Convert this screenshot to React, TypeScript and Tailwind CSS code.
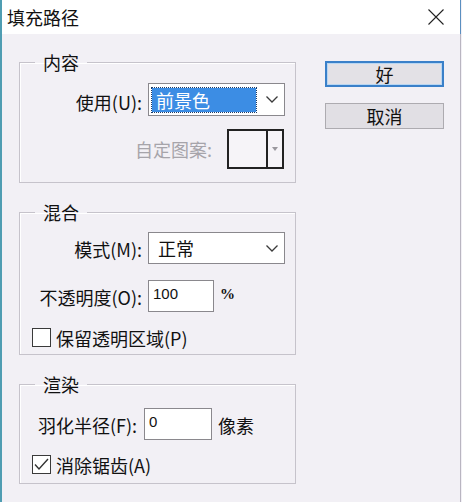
import React from "react"

function Chevron() {
  return (
    <svg width="12" height="7" viewBox="0 0 12 7" fill="none">
      <path d="M0.5 0.5 L6 6 L11.5 0.5" stroke="#3a3a3a" strokeWidth="1.3" />
    </svg>
  )
}

function Group({ title, className, children }: { title: string; className: string; children: React.ReactNode }) {
  return (
    <fieldset className={`w-[277px] border border-[#c6c3cb] shadow-[inset_1px_1px_0_#ffffff] ${className}`}>
      <legend className="ml-[15px] px-[8px] text-[18px] leading-[22px] text-[#111]">{title}</legend>
      {children}
    </fieldset>
  )
}

function Check({ checked }: { checked?: boolean }) {
  return (
    <span className="w-[19px] h-[19px] border border-[#3a3a3a] bg-white flex items-center justify-center">
      {checked && (
        <svg width="15" height="13" viewBox="0 0 15 13" fill="none">
          <path d="M1 6.5 L5 11 L14 1" stroke="#333" strokeWidth="1.4" />
        </svg>
      )}
    </span>
  )
}

export default function App() {
  return (
    <div className="w-[462px] h-[502px] flex border-l-2 border-[#4f9db2] font-['Noto_Sans_CJK_SC',sans-serif] text-[#111] overflow-hidden">
      <div className="flex-1 flex flex-col">
        <div className="h-[34px] bg-white flex items-center justify-between pl-[5px] pr-[16px]">
          <span className="text-[18px] leading-none">填充路径</span>
          <svg width="16" height="16" viewBox="0 0 16 16" fill="none">
            <path d="M0.5 0.5 L15.5 15.5 M15.5 0.5 L0.5 15.5" stroke="#222" strokeWidth="1.1" />
          </svg>
        </div>
        <div className="flex-1 bg-[#f2f0f5] flex pl-[17px] pt-[17px] gap-[29px]">
          <div className="flex flex-col gap-[18px]">
            <Group title="内容" className="pt-[10px] pb-[13px]">
              <div className="flex items-center">
                <span className="w-[122px] text-right text-[18px] leading-none pt-[4px]">使用(U):</span>
                <div className="ml-[6px] w-[137px] h-[33px] bg-white border border-[#8a888d] flex items-center justify-between pl-[3px] pr-[6px]">
                  <span className="w-[104px] h-[24px] bg-[#3c8de4] outline outline-1 outline-dotted outline-[#1b3a66] text-white text-[18px] leading-[24px] pl-[4px]">前景色</span>
                  <Chevron />
                </div>
              </div>
              <div className="flex items-center justify-end pr-[11px] mt-[13px] gap-[15px]">
                <span className="text-[18px] leading-none text-[#a6a4aa]">自定图案:</span>
                <div className="w-[57px] h-[40px] border-2 border-[#222] flex">
                  <div className="flex-1 bg-[#f6f4f8]" />
                  <div className="w-[16px] border-l-2 border-[#222] bg-[#f6f4f8] flex items-center justify-center">
                    <svg width="6" height="4" viewBox="0 0 6 4">
                      <path d="M0 0 L6 0 L3 4 Z" fill="#9a989e" />
                    </svg>
                  </div>
                </div>
              </div>
            </Group>
            <Group title="混合" className="pt-[9px] pb-[7px]">
              <div className="flex items-center">
                <span className="w-[122px] text-right text-[18px] leading-none pt-[2px]">模式(M):</span>
                <div className="ml-[6px] w-[137px] h-[32px] bg-white border border-[#8a888d] flex items-center justify-between pl-[9px] pr-[6px]">
                  <span className="text-[18px] leading-none">正常</span>
                  <Chevron />
                </div>
              </div>
              <div className="flex items-center mt-[16px]">
                <span className="w-[122px] text-right text-[18px] leading-none pt-[2px]">不透明度(O):</span>
                <div className="ml-[6px] w-[66px] h-[32px] bg-white border border-[#8a888d] pl-[4px] pt-[4px] font-['Liberation_Sans',sans-serif] text-[15px] leading-[18px]">
                  100
                </div>
                <span className="ml-[6px] text-[15px] font-bold leading-none font-['Liberation_Serif',serif] -mt-[4px]">%</span>
              </div>
              <div className="flex items-center h-[19px] mt-[16px] ml-[12px] gap-[5px]">
                <Check />
                <span className="text-[18px] leading-none">保留透明区域(P)</span>
              </div>
            </Group>
            <Group title="渲染" className="pt-[13px] pb-[9px]">
              <div className="flex items-center">
                <span className="w-[117px] text-right text-[18px] leading-none pt-[2px]">羽化半径(F):</span>
                <div className="ml-[7px] w-[68px] h-[32px] bg-white border border-[#8a888d] pl-[4px] pt-[4px] font-['Liberation_Sans',sans-serif] text-[15px] leading-[18px]">
                  0
                </div>
                <span className="ml-[6px] text-[18px] leading-none pt-[2px]">像素</span>
              </div>
              <div className="flex items-center h-[19px] mt-[15px] ml-[12px] gap-[5px]">
                <Check checked />
                <span className="text-[18px] leading-none">消除锯齿(A)</span>
              </div>
            </Group>
          </div>
          <div className="w-[119px] mt-[10px] flex flex-col gap-[16px]">
            <button className="h-[26px] border-2 border-[#3a80c9] bg-[#e3e1e6] shadow-[inset_0_0_0_1px_#b8d6f2] text-[18px] leading-none">
              好
            </button>
            <button className="h-[26px] border border-[#adabb0] bg-[#e1dfe4] text-[18px] leading-none">
              取消
            </button>
          </div>
        </div>
      </div>
      <div className="w-px flex flex-col">
        <div className="h-[34px] bg-[#5a8fc0]" />
        <div className="flex-1 bg-[#b9b5c1]" />
      </div>
      <div className="w-px bg-[#f2f0f5]" />
    </div>
  )
}
